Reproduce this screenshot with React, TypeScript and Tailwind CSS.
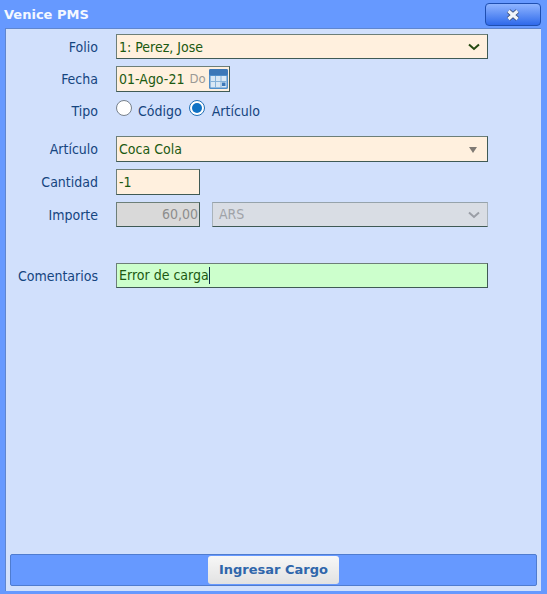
import React from 'react'

const bodyFont = "font-['DejaVu_Sans_Condensed','Noto_Sans',sans-serif]"
const boldFont = "font-['DejaVu_Sans',sans-serif] font-bold"

const Label = ({ children, className = '' }: { children: React.ReactNode; className?: string }) => (
  <label className={`w-[88px] shrink-0 text-right text-[14px] leading-[20px] text-[#15457f] ${className}`}>
    {children}
  </label>
)

const Field = ({ className = '', children }: { className?: string; children?: React.ReactNode }) => (
  <div
    className={`flex items-center whitespace-nowrap border border-t-[#6d7f78] border-l-[#6d7f78] border-r-[#3f5a55] border-b-[#3f5a55] text-[14px] text-[#1c5a12] ${className}`}
  >
    {children}
  </div>
)

const Chevron = ({ color }: { color: string }) => (
  <svg width="12" height="8" viewBox="0 0 12 8" className="ml-auto mr-[7px] shrink-0">
    <path d="M1 1.5 L6 6 L11 1.5" fill="none" stroke={color} strokeWidth="2" />
  </svg>
)

const CalendarIcon = () => (
  <svg width="19" height="20" viewBox="0 0 19 20" className="shrink-0">
    <rect x="0" y="0" width="19" height="20" rx="1.5" fill="#4f8fcb" />
    <rect x="0" y="0" width="19" height="6" rx="1.5" fill="#3c78b8" />
    <rect x="1.5" y="7" width="16" height="11.5" fill="#d9e8f5" />
    <path d="M6.5 7 V18.5 M12 7 V18.5 M1.5 12.5 H17.5" stroke="#86b2d9" strokeWidth="1" />
    <rect x="13" y="13.5" width="3.5" height="3.5" fill="#3c78b8" />
  </svg>
)

const Radio = ({ checked }: { checked?: boolean }) => (
  <span
    className={`flex size-[16px] shrink-0 items-center justify-center rounded-full border bg-white ${
      checked ? 'border-[#1f6fb5]' : 'border-[#77818c]'
    }`}
  >
    {checked && <span className="size-[10px] rounded-full bg-[#0f72c4]" />}
  </span>
)

export default function App() {
  return (
    <div className={`flex h-[594px] w-[547px] flex-col overflow-hidden bg-[#6699ff] ${bodyFont}`}>
      <header className="flex h-[28px] shrink-0 items-start justify-between pl-[4px] pr-[6px] pt-[3px]">
        <span className={`mt-[3px] text-[13px] leading-[18px] text-[#f4f8ff] ${boldFont}`}>Venice PMS</span>
        <button className="flex h-[23px] w-[56px] items-center justify-center rounded-[4px] border border-[#1f4fb0] bg-linear-to-b from-[#8fb4ff] to-[#2f69ea]">
          <svg width="14" height="12" viewBox="0 0 14 12">
            <path d="M2.5 2 L11.5 10 M11.5 2 L2.5 10" stroke="#3d4f78" strokeWidth="5" />
            <path d="M2.5 2 L11.5 10 M11.5 2 L2.5 10" stroke="#f2f5fb" strokeWidth="3.2" />
          </svg>
        </button>
      </header>

      <div className="ml-[5px] mr-[6px] mb-[3px] flex min-h-0 flex-1 flex-col border-t border-l border-[#5f86cf] bg-[#d1e0fc] px-[4px] pb-[5px]">
        <div className="flex flex-col pt-[5px]">
          <div className="flex h-[25px] items-center gap-[18px]">
            <Label>Folio</Label>
            <Field className="h-[25px] w-[372px] bg-[#fff0de] pl-[2px] pt-px">
              1: Perez, Jose
              <Chevron color="#23480f" />
            </Field>
          </div>

          <div className="mt-[7px] flex h-[26px] items-center gap-[18px]">
            <Label>Fecha</Label>
            <Field className="h-[26px] w-[114px] bg-[#fff0de] pl-[2px]">
              01-Ago-21
              <span className="ml-[5px] text-[13px] text-[#9a9a96]">Do</span>
              <span className="ml-auto mr-[1px]">
                <CalendarIcon />
              </span>
            </Field>
          </div>

          <div className="flex h-[44px] items-start gap-[18px] pt-[9px]">
            <Label>Tipo</Label>
            <div className="flex items-center text-[14px] leading-[20px] text-[#15457f]">
              <span className="-mt-[6px]"><Radio /></span>
              <span className="ml-[6px]">Código</span>
              <span className="-mt-[6px] ml-[7px]"><Radio checked /></span>
              <span className="ml-[7px]">Artículo</span>
            </div>
          </div>

          <div className="flex h-[26px] items-center gap-[18px]">
            <Label>Artículo</Label>
            <Field className="h-[26px] w-[372px] bg-[#fff0de] pl-[2px] pt-px">
              Coca Cola
              <span className="ml-auto mr-[10px] h-0 w-0 border-x-[4px] border-t-[6px] border-x-transparent border-t-[#7f7a74]" />
            </Field>
          </div>

          <div className="mt-[7px] flex h-[26px] items-center gap-[18px]">
            <Label>Cantidad</Label>
            <Field className="h-[26px] w-[84px] bg-[#fff0de] pl-[2px] pt-px">-1</Field>
          </div>

          <div className="mt-[7px] flex h-[25px] items-center gap-[18px]">
            <Label>Importe</Label>
            <Field className="h-[25px] w-[84px] justify-end bg-[#d9d9d9] pr-[1px] text-[#8d8d8d]">60,00</Field>
            <Field className="-ml-[6px] h-[25px] w-[276px] border-t-[#96a3ab] border-l-[#a9b3bb] border-r-[#a9b3bb] bg-[#d9dde4] pl-[6px] text-[#a0a3a8]">
              ARS
              <Chevron color="#9a9ea6" />
            </Field>
          </div>

          <div className="mt-[36px] flex h-[25px] items-center gap-[18px]">
            <Label>Comentarios</Label>
            <Field className="h-[25px] w-[372px] bg-[#ccffcc] pl-[2px]">
              Error de carga
              <span className="h-[17px] w-px bg-[#12304a]" />
            </Field>
          </div>
        </div>

        <footer className="mt-auto flex h-[32px] shrink-0 items-center justify-center rounded-[2px] border border-[#4f7ccf] bg-[#6699ff]">
          <button
            className={`h-[28px] w-[131px] rounded-[3px] bg-linear-to-b from-[#f7f7f7] to-[#e2e2e2] text-[13px] text-[#2f66ab] ${boldFont}`}
          >
            Ingresar Cargo
          </button>
        </footer>
      </div>
    </div>
  )
}
